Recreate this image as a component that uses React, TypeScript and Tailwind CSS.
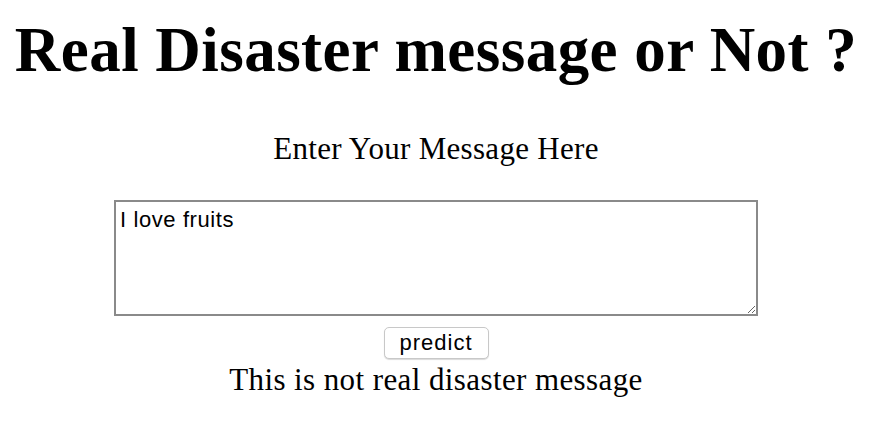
import React, { useState } from 'react';

const App: React.FC = () => {
  const [message, setMessage] = useState('I love fruits');

  return (
    <div className="w-[872px] h-[424px] bg-white text-black font-['Liberation_Serif',serif] flex flex-col items-center">
      <h1 className="mt-[19px] text-[63px] leading-[63px] tracking-[0.45px] font-bold whitespace-nowrap">
        Real Disaster message or Not ?
      </h1>
      <p className="mt-[51px] text-[31px] leading-[31px] tracking-[0.3px]">Enter Your Message Here</p>
      <textarea
        value={message}
        onChange={(e) => setMessage(e.target.value)}
        className="mt-[36px] w-[644px] h-[116px] border-2 border-[#8a8a8a] pt-[5px] px-[4px] text-[22px] leading-[26px] tracking-[0.6px] font-['Liberation_Sans',sans-serif] resize outline-none"
      />
      <button className="mt-[11px] w-[105px] h-[32px] rounded-[5px] border border-[#c8c8c8] bg-white shadow-[0_1px_1px_rgba(0,0,0,0.15)] text-[22px] leading-[24px] tracking-[1px] font-['Liberation_Sans',sans-serif]">
        predict
      </button>
      <p className="mt-[5px] text-[31px] leading-[31px] tracking-[0.4px]">This is not real disaster message</p>
    </div>
  );
};

export default App;
